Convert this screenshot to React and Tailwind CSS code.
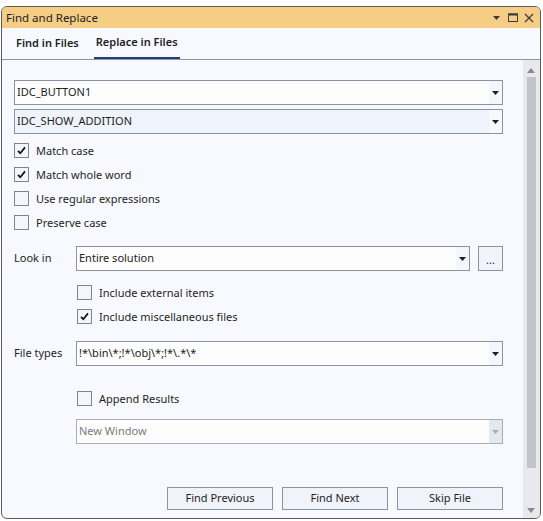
import React from "react";

const font = { fontFamily: '"Noto Sans", "Open Sans", sans-serif' };

function Arrow({ color = "#1e1e1e" }) {
  return (
    <svg width="7" height="4" viewBox="0 0 7 4">
      <path d="M0 0 H7 L3.5 4 Z" fill={color} />
    </svg>
  );
}

function Combo({ text, className = "", mainBg = "bg-[#fdfdfd]", btnBg = "bg-[#f3f6fc]", disabled = false }) {
  return (
    <div
      className={`h-[25px] border flex items-stretch ${
        disabled ? "border-[#a9adb5]" : "border-[#8b93a6]"
      } ${className}`}
    >
      <div
        className={`flex-1 flex items-center pl-[2px] text-[11px] ${mainBg} ${
          disabled ? "text-[#7a7a7a]" : "text-[#1e1e1e]"
        }`}
      >
        {text}
      </div>
      <div className={`w-[13px] flex items-center justify-center ${btnBg}`}>
        <Arrow color={disabled ? "#a8acb3" : "#1e1e1e"} />
      </div>
    </div>
  );
}

function Check({ checked, label, className = "" }) {
  return (
    <div className={`flex items-center h-[15px] ${className}`}>
      <div className="w-[15px] h-[15px] border border-[#80848e] bg-[#f3f6fc] flex items-center justify-center">
        {checked && (
          <svg width="13" height="13" viewBox="0 0 13 13">
            <path d="M3 6.8 L5.3 9.2 L10 3.4" fill="none" stroke="#111" strokeWidth="1.7" />
          </svg>
        )}
      </div>
      <span className="ml-[7px] text-[11px] text-[#1e1e1e] leading-none">{label}</span>
    </div>
  );
}

function Button({ children }) {
  return (
    <div className="w-[106px] h-[23px] border border-[#8b93a6] bg-[#f0f3fa] flex items-center justify-center text-[11px] text-[#1e1e1e]">
      {children}
    </div>
  );
}

export default function App() {
  return (
    <div className="w-[543px] h-[521px] bg-white overflow-hidden" style={font}>
      <div className="ml-[1px] mt-[6px] w-[540px] h-[513px] border border-[#5c5c5c] rounded-[6px] overflow-hidden flex flex-col bg-[#f7f9fe]">
        {/* Title bar */}
        <div className="h-[21px] bg-[#f5cd85] flex items-center pl-[4px] pr-[6px]">
          <span className="text-[11.5px] text-[#1e1e1e]">Find and Replace</span>
          <div className="ml-auto flex items-center">
            <svg width="7" height="4" viewBox="0 0 7 4" className="mr-[8px]">
              <path d="M0 0 H7 L3.5 4 Z" fill="#3b3b3b" />
            </svg>
            <svg width="10" height="9" viewBox="0 0 10 9" className="mr-[6px]">
              <rect x="0.5" y="1" width="9" height="7.5" fill="none" stroke="#3b3b3b" strokeWidth="1" />
              <rect x="0" y="0.5" width="10" height="2" fill="#3b3b3b" />
            </svg>
            <svg width="10" height="10" viewBox="0 0 10 10">
              <path d="M1 1 L9 9 M9 1 L1 9" stroke="#3b3b3b" strokeWidth="1.2" />
            </svg>
          </div>
        </div>

        {/* Tabs */}
        <div className="h-[32px] border-b border-[#8e96a6] flex items-end pl-[13px]">
          <div className="h-[31px] px-[1px] flex items-center text-[11px] font-semibold text-[#1e1e1e]">
            Find in Files
          </div>
          <div className="ml-[14px] h-[31px] px-[2px] flex items-center text-[11px] font-semibold text-[#1e1e1e] border-b-2 border-[#243f7c]">
            Replace in Files
          </div>
        </div>

        {/* Body */}
        <div className="flex-1 flex">
          <div className="flex-1 flex flex-col pl-[12px] pr-[20px] pt-[20px]">
            <Combo text="IDC_BUTTON1" />
            <Combo
              text="IDC_SHOW_ADDITION"
              className="mt-[4px]"
              mainBg="bg-[#eff3fc]"
              btnBg="bg-[#f7f9fe]"
            />

            <Check checked label="Match case" className="mt-[9px]" />
            <Check checked label="Match whole word" className="mt-[9px]" />
            <Check label="Use regular expressions" className="mt-[9px]" />
            <Check label="Preserve case" className="mt-[9px]" />

            <div className="mt-[16px] flex items-center">
              <span className="w-[62px] text-[11px] text-[#1e1e1e]">Look in</span>
              <Combo text="Entire solution" className="flex-1" />
              <div className="ml-[8px] w-[25px] h-[25px] border border-[#8b93a6] bg-[#f0f3fa] flex items-end justify-center pb-[5px] text-[11px] leading-none text-[#2a2a2a]">
                ...
              </div>
            </div>

            <div className="pl-[63px] flex flex-col">
              <Check label="Include external items" className="mt-[14px]" />
              <Check checked label="Include miscellaneous files" className="mt-[9px]" />
            </div>

            <div className="mt-[17px] flex items-center">
              <span className="w-[62px] text-[11px] text-[#1e1e1e]">File types</span>
              <Combo text={"!*\\bin\\*;!*\\obj\\*;!*\\.*\\*"} className="flex-1" />
            </div>

            <div className="pl-[63px] flex flex-col">
              <Check label="Append Results" className="mt-[25px]" />
            </div>
            <div className="pl-[62px] mt-[13px]">
              <Combo text="New Window" disabled btnBg="bg-[#e4e9f1]" />
            </div>

            <div className="mt-[43px] flex justify-end gap-[9px]">
              <Button>Find Previous</Button>
              <Button>Find Next</Button>
              <Button>Skip File</Button>
            </div>
          </div>

          {/* Scrollbar */}
          <div className="w-[17px] bg-[#e9e9ed] flex flex-col items-start pl-[4px]">
            <div className="h-[10px] mt-[5px] flex items-center">
              <svg width="8" height="5" viewBox="0 0 8 5">
                <path d="M0 5 H8 L4 0 Z" fill="#8a8a8e" />
              </svg>
            </div>
            <div className="mt-[2px] w-[9px] h-[391px] bg-[#c2c3c9]" />
            <div className="mt-[40px] flex items-center">
              <svg width="8" height="5" viewBox="0 0 8 5">
                <path d="M0 0 H8 L4 5 Z" fill="#8a8a8e" />
              </svg>
            </div>
          </div>
        </div>
      </div>
    </div>
  );
}
